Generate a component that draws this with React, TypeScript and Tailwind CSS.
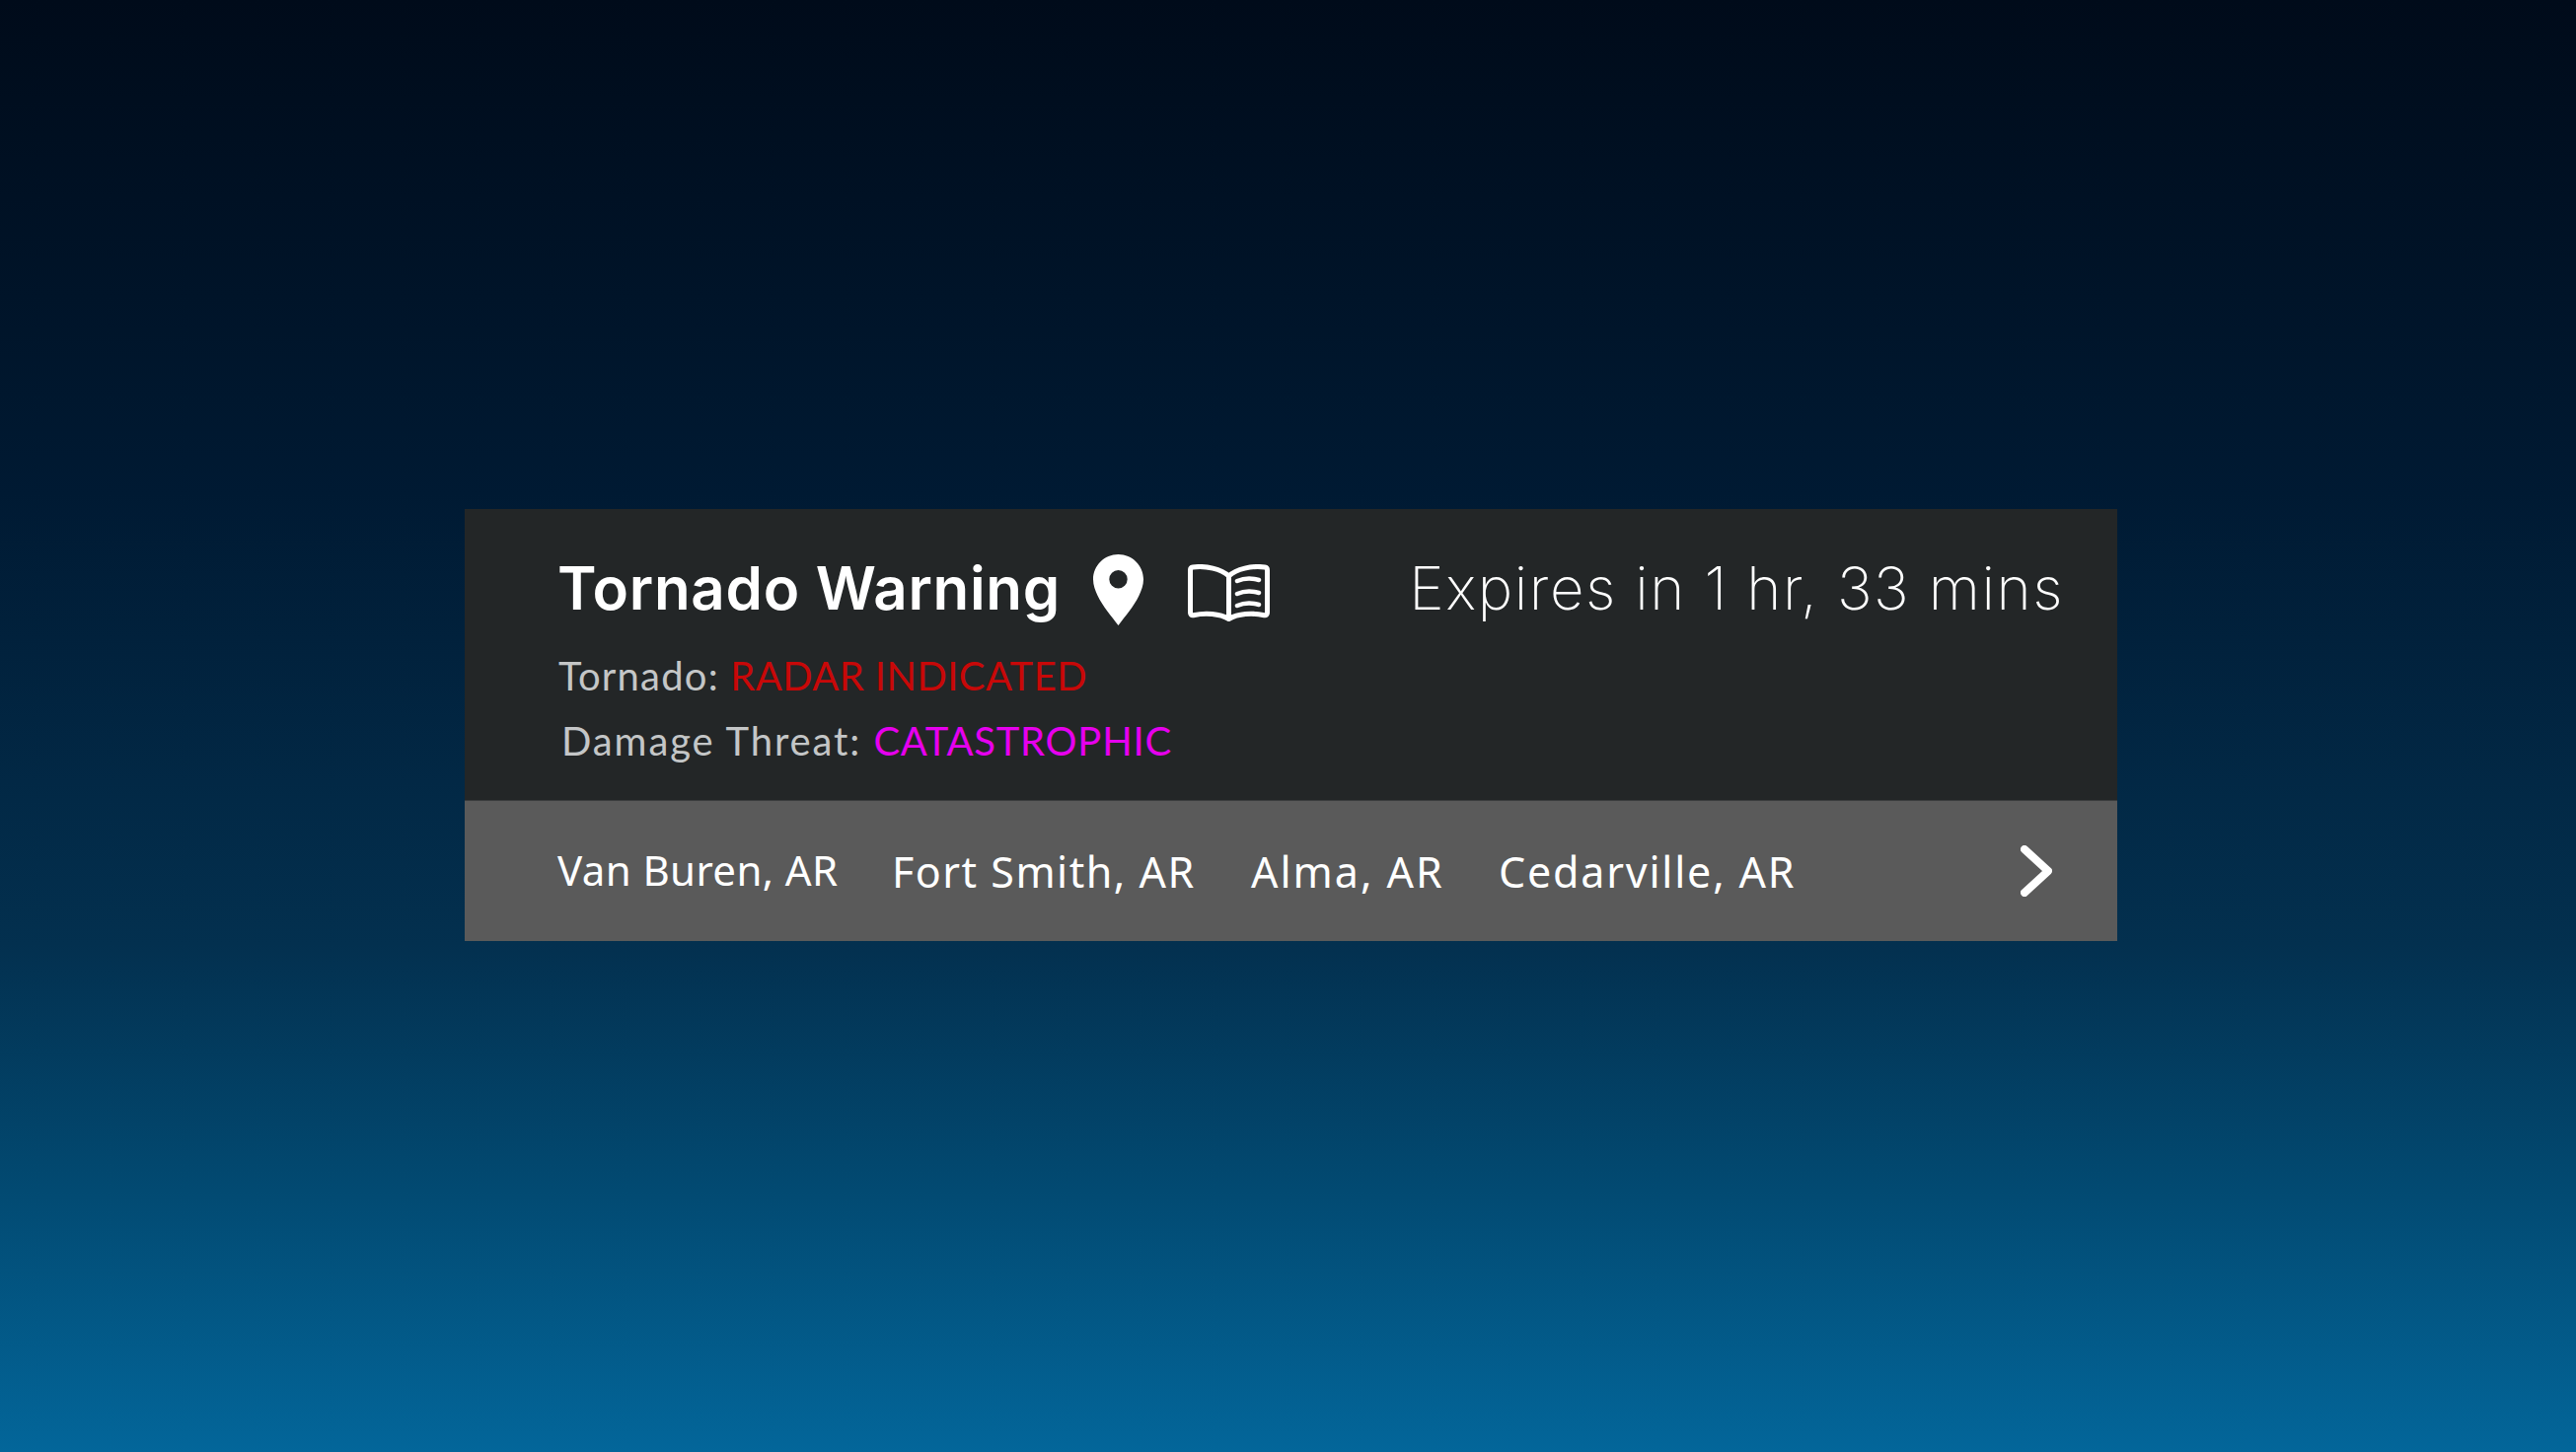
import React from 'react'

const CITIES = [
  { name: 'Van Buren, AR', cls: 'ml-[94px] -mt-[4px] w-[339px] text-[42px] tracking-[0.400px]' },
  { name: 'Fort Smith, AR', cls: 'w-[364px] text-[43px] tracking-[1.500px]' },
  { name: 'Alma, AR', cls: 'w-[251px] text-[43px] tracking-[2px]' },
  { name: 'Cedarville, AR', cls: 'text-[43px] tracking-[1.800px]' },
]

function Pin() {
  return (
    <svg width="51" height="72" viewBox="0 0 51 72" className="mt-[6px] shrink-0">
      <path
        fillRule="evenodd"
        fill="#fff"
        d="M25.5 0C11.4 0 0 11.3 0 25.3c0 6 2.2 11.6 4.6 16.7C9.7 52.6 18.500 62.500 25.500 72c7-9.500 15.800-19.400 20.900-30C48.800 36.900 51 31.300 51 25.300 51 11.300 39.600 0 25.500 0zM25.500 16a9.200 9.200 0 1 1 0 18.400a9.200 9.200 0 0 1 0-18.400z"
      />
    </svg>
  )
}

function Book() {
  return (
    <svg width="83" height="58" viewBox="0 0 83 58" fill="none" stroke="#fff" className="shrink-0">
      <path
        strokeWidth="5"
        strokeLinejoin="round"
        d="M41.500 12C34 5 18 1 5 3c-2 .3-2.500 1.500-2.500 3v43c0 2 1 3 3 2.700C18 49 32 50 41.500 55.500 51 50 65 49 77.500 51.700c2 .3 3-.7 3-2.700V6c0-1.500-.5-2.700-2.500-3C65 1 49 5 41.500 12zM41.500 12v43"
      />
      <path strokeWidth="4.500" strokeLinecap="round" d="M50 17c7-3 15-3 22-1M50 30c7-3 15-3 22-1M50 42c7-3 15-3 22-1" />
    </svg>
  )
}

export default function App() {
  return (
    <div className="h-[1472px] w-full pt-[516px] pl-[471px] bg-[linear-gradient(to_bottom,#000b1a_0%,#001a33_34%,#03304f_65%,#024a72_82%,#03669a_100%)] font-['Lato',sans-serif]">
      <div className="w-[1675px]">
        {/* Warning header */}
        <div className="h-[295px] bg-[#232627] pt-[40px]">
          <div className="flex h-[90px] items-start pl-[94px]">
            <h1 className="mt-[4px] w-[543px] shrink-0 font-['Inter',sans-serif] text-[60px] leading-[72px] font-semibold tracking-[0.700px] text-white">Tornado Warning</h1>
            <Pin />
            <div className="mt-[16px] ml-[45px]">
              <Book />
            </div>
            <span className="mt-[4px] ml-auto mr-[54px] font-['Inter',sans-serif] text-[60px] leading-[72px] font-extralight tracking-[1.550px] text-white">Expires in 1 hr, 33 mins</span>
          </div>
          <p className="mt-[15px] pl-[95px] text-[40px] leading-[48px] font-normal tracking-[1.200px] text-[#c4c6c7]">
            Tornado: <span className="tracking-[0.400px] text-[#c80808]">RADAR INDICATED</span>
          </p>
          <p className="mt-[18px] pl-[98px] text-[40px] leading-[48px] font-normal tracking-[1.900px] text-[#c4c6c7]">
            Damage Threat: <span className="tracking-[0.750px] text-[#e600ee]">CATASTROPHIC</span>
          </p>
        </div>
        {/* Affected cities */}
        <div className="flex h-[143px] items-center border-t border-[#3a3c3d] bg-[#5a5a5a] pt-[2px] pr-[66px] font-['Noto_Sans',sans-serif] leading-[52px] text-white">
          {CITIES.map(c => (
            <span key={c.name} className={`shrink-0 ${c.cls}`}>{c.name}</span>
          ))}
          <svg width="32" height="52" viewBox="0 0 32 52" fill="none" stroke="#fff" strokeWidth="8" strokeLinecap="round" strokeLinejoin="round" className="-mt-[2px] ml-auto shrink-0">
            <path d="M4 4l24 22L4 48" />
          </svg>
        </div>
      </div>
    </div>
  )
}
